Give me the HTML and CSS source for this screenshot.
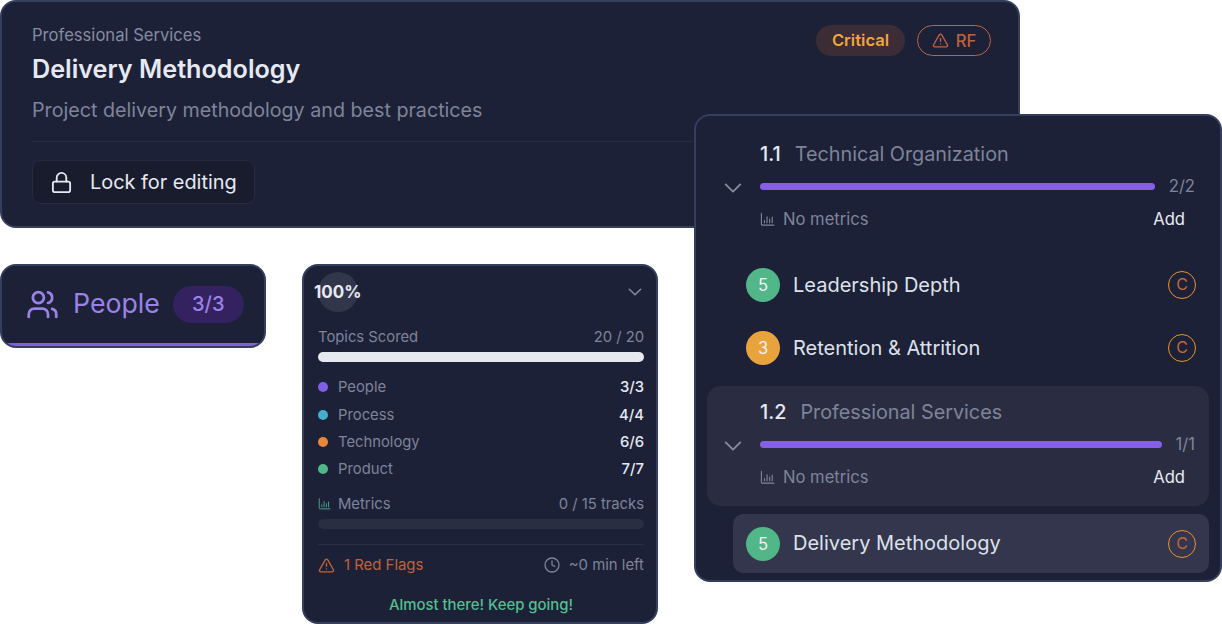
FILE: index.html
```html
<!DOCTYPE html>
<html lang="en">
<head>
    <meta charset="UTF-8">
    <meta name="viewport" content="width=device-width, initial-scale=1.0">
    <title>Delivery Methodology</title>
    <link rel="stylesheet" href="styles.css">
</head>
<body>
    <svg class="icon-defs" width="0" height="0">
        <symbol id="bars" viewBox="0 0 16 16">
            <path d="M1.500 1.500v11.500a1 1 0 0 0 1 1h12.300M4.800 11.500V9M7.500 11.500V5M10.300 11.500V7.500M13 11.500V5.500" fill="none" stroke="currentColor" stroke-width="1.200" stroke-linecap="round" stroke-linejoin="round"/>
        </symbol>
        <symbol id="chevron" viewBox="0 0 16 16">
            <path d="M1.500 4.800 8 11.200l6.500-6.400" fill="none" stroke="currentColor" stroke-width="1.700" stroke-linecap="round" stroke-linejoin="round"/>
        </symbol>
        <symbol id="warn" viewBox="0 0 24 24">
            <path d="m21.730 18-8-14a2 2 0 0 0-3.480 0l-8 14A2 2 0 0 0 4 21h16a2 2 0 0 0 1.730-3ZM12 9v4M12 17h.01" fill="none" stroke="currentColor" stroke-width="1.900" stroke-linecap="round" stroke-linejoin="round"/>
        </symbol>
    </svg>

    <section class="card method-card">
        <div class="method-top">
            <div>
                <div class="method-group">Professional Services</div>
                <h1 class="method-title">Delivery Methodology</h1>
            </div>
            <div class="method-badges">
                <span class="badge-critical">Critical</span>
                <span class="badge-rf"><svg class="rf-icon"><use href="#warn"/></svg>RF</span>
            </div>
        </div>
        <p class="method-desc">Project delivery methodology and best practices</p>
        <div class="method-rule"></div>
        <button class="lock-btn">
            <svg class="lock-icon" viewBox="0 0 24 24"><rect x="3" y="11" width="18" height="11" rx="2" fill="none" stroke="currentColor" stroke-width="1.900"/><path d="M7 11V7a5 5 0 0 1 10 0v4" fill="none" stroke="currentColor" stroke-width="1.900" stroke-linecap="round"/></svg>
            Lock for editing
        </button>
    </section>

    <section class="card people-card">
        <svg class="people-icon" viewBox="0 0 24 24"><g fill="none" stroke="currentColor" stroke-width="2" stroke-linecap="round" stroke-linejoin="round"><path d="M16 21v-2a4 4 0 0 0-4-4H6a4 4 0 0 0-4 4v2"/><circle cx="9" cy="7" r="4"/><path d="M22 21v-2a4 4 0 0 0-3-3.870"/><path d="M16 3.130a4 4 0 0 1 0 7.750"/></g></svg>
        <span class="people-label">People</span>
        <span class="people-count">3/3</span>
    </section>

    <section class="card progress-card">
        <div class="progress-head">
            <div class="pct-wrap"><span class="pct-ring"></span><span class="pct-text">100%</span></div>
            <svg class="progress-chevron"><use href="#chevron"/></svg>
        </div>
        <div class="stat-row topics-row"><span>Topics Scored</span><span>20 / 20</span></div>
        <div class="topics-track"></div>
        <ul class="pillar-list">
            <li class="pillar"><span class="dot dot-people"></span><span class="pillar-name">People</span><b class="pillar-num">3/3</b></li>
            <li class="pillar"><span class="dot dot-process"></span><span class="pillar-name">Process</span><b class="pillar-num">4/4</b></li>
            <li class="pillar"><span class="dot dot-tech"></span><span class="pillar-name">Technology</span><b class="pillar-num">6/6</b></li>
            <li class="pillar"><span class="dot dot-product"></span><span class="pillar-name">Product</span><b class="pillar-num">7/7</b></li>
        </ul>
        <div class="stat-row metrics-row"><span class="metrics-label"><svg class="metrics-icon"><use href="#bars"/></svg>Metrics</span><span>0 / 15 tracks</span></div>
        <div class="metrics-track"></div>
        <div class="progress-foot">
            <span class="flags"><svg class="flags-icon"><use href="#warn"/></svg>1 Red Flags</span>
            <span class="time-left">
                <svg class="clock-icon" viewBox="0 0 24 24"><circle cx="12" cy="12" r="10.500" fill="none" stroke="currentColor" stroke-width="1.900"/><path d="M12 6v6l4 2" fill="none" stroke="currentColor" stroke-width="1.900" stroke-linecap="round" stroke-linejoin="round"/></svg>
                ~0 min left
            </span>
        </div>
        <div class="keep-going">Almost there! Keep going!</div>
    </section>

    <section class="card tree-card">
        <div class="section-row section-first">
            <svg class="section-chevron"><use href="#chevron"/></svg>
            <div class="section-body">
                <div class="section-title"><b>1.1</b><span>Technical Organization</span></div>
                <div class="section-bar"><div class="bar-fill"></div><span class="bar-count">2/2</span></div>
                <div class="section-meta"><span class="no-metrics"><svg class="meta-icon"><use href="#bars"/></svg>No metrics</span><span class="add-link">Add</span></div>
            </div>
        </div>
        <div class="topic">
            <span class="score score-green">5</span><span class="topic-name">Leadership Depth</span><span class="c-mark">C</span>
        </div>
        <div class="topic">
            <span class="score score-amber">3</span><span class="topic-name">Retention &amp; Attrition</span><span class="c-mark">C</span>
        </div>
        <div class="section-row section-active">
            <svg class="section-chevron"><use href="#chevron"/></svg>
            <div class="section-body">
                <div class="section-title"><b>1.2</b><span>Professional Services</span></div>
                <div class="section-bar"><div class="bar-fill"></div><span class="bar-count">1/1</span></div>
                <div class="section-meta"><span class="no-metrics"><svg class="meta-icon"><use href="#bars"/></svg>No metrics</span><span class="add-link">Add</span></div>
            </div>
        </div>
        <div class="topic topic-active">
            <span class="score score-green">5</span><span class="topic-name">Delivery Methodology</span><span class="c-mark">C</span>
        </div>
    </section>
</body>
</html>
```

FILE: styles.css
```css
* {
    box-sizing: border-box;
}
html, body {
    margin: 0;
    padding: 0;
}
body {
    position: relative;
    width: 1222px;
    height: 624px;
    overflow: hidden;
    background-color: #fff;
    font-family: Inter, "Liberation Sans", sans-serif;
    color: #e7e9f1;
}
.icon-defs {
    position: absolute;
}
.card {
    position: absolute;
    background-color: #1c2138;
    border: 2px solid #333f5c;
}

/* top card */
.method-card {
    left: 0;
    top: 0;
    width: 1020px;
    height: 228px;
    border-radius: 16px;
    padding: 23px 27px 0 30px;
}
.method-top {
    display: flex;
    justify-content: space-between;
}
.method-group {
    font-size: 16.6px;
    line-height: 20px;
    color: #868b9f;
}
.method-title {
    margin: 8px 0 0;
    font-size: 25.2px;
    line-height: 32px;
    font-weight: 600;
    color: #e7e9f1;
}
.method-badges {
    display: flex;
    gap: 12px;
    align-items: flex-start;
}
.badge-critical {
    width: 89px;
    height: 31px;
    border-radius: 16px;
    background-color: #3b2c35;
    color: #f0a63c;
    font-size: 16.6px;
    font-weight: 600;
    line-height: 31px;
    text-align: center;
}
.badge-rf {
    display: flex;
    align-items: center;
    justify-content: center;
    gap: 7px;
    width: 74px;
    height: 31px;
    border: 1px solid #c0623c;
    border-radius: 16px;
    color: #c0623c;
    font-size: 16.6px;
    font-weight: 500;
}
.rf-icon {
    width: 17px;
    height: 17px;
}
.method-desc {
    margin: 13px 0 0;
    font-size: 19.7px;
    line-height: 24px;
    color: #7f8498;
}
.method-rule {
    height: 1px;
    margin-top: 19px;
    background-color: #272c44;
}
.lock-btn {
    display: flex;
    align-items: center;
    gap: 17px;
    width: 223px;
    height: 44px;
    margin-top: 18px;
    padding: 0 0 0 17px;
    background-color: #191c2d;
    border: 1px solid #262b42;
    border-radius: 8px;
    color: #e7e9f1;
    font-family: inherit;
    font-size: 19.9px;
    font-weight: 400;
}
.lock-icon {
    width: 23px;
    height: 23px;
}

/* people tab */
.people-card {
    left: 0;
    top: 264px;
    width: 266px;
    height: 84px;
    border-radius: 16px;
    display: flex;
    align-items: center;
    padding: 0 0 4px 24px;
    color: #9b82e6;
    overflow: hidden;
}
.people-card::after {
    content: "";
    position: absolute;
    left: 0;
    right: 0;
    bottom: 0;
    height: 3px;
    background-color: #7f5fe0;
}
.people-icon {
    width: 33px;
    height: 33px;
    flex: none;
}
.people-label {
    margin: 0 0 2px 14px;
    font-size: 26.7px;
    line-height: 32px;
}
.people-count {
    width: 71px;
    height: 37px;
    margin-left: 13px;
    border-radius: 19px;
    background-color: #33225f;
    font-size: 20px;
    font-weight: 500;
    line-height: 37px;
    text-align: center;
}

/* progress summary */
.progress-card {
    left: 302px;
    top: 264px;
    width: 356px;
    height: 360px;
    border-radius: 16px;
    padding: 6px 12px 0 14px;
}
.progress-head {
    display: flex;
    justify-content: space-between;
    align-items: center;
    height: 40px;
}
.pct-wrap {
    position: relative;
    width: 40px;
    height: 40px;
}
.pct-ring {
    position: absolute;
    left: 0;
    top: 0;
    width: 40px;
    height: 40px;
    border-radius: 50%;
    background-color: #32364b;
}
.pct-text {
    position: absolute;
    left: -4px;
    top: 10px;
    font-size: 17px;
    line-height: 20px;
    font-weight: 700;
    color: #e7e9f1;
    white-space: nowrap;
}
.progress-chevron {
    width: 14px;
    height: 14px;
    color: #868b9f;
    margin-right: 2px;
}
.stat-row {
    display: flex;
    justify-content: space-between;
    font-size: 14.8px;
    line-height: 18px;
    color: #7f8498;
}
.topics-row {
    margin-top: 16px;
}
.topics-track {
    height: 10px;
    margin-top: 6px;
    border-radius: 5px;
    background-color: #e7e9f1;
}
.pillar-list {
    list-style: none;
    margin: 11.5px 0 0;
    padding: 0;
}
.pillar {
    display: flex;
    align-items: center;
    height: 27.4px;
    font-size: 14.8px;
    color: #7f8498;
}
.dot {
    width: 10px;
    height: 10px;
    border-radius: 50%;
    margin-right: 10px;
}
.dot-people { background-color: #7f5fe8; }
.dot-process { background-color: #46aec8; }
.dot-tech { background-color: #e8873c; }
.dot-product { background-color: #52b788; }
.pillar-name {
    flex: 1;
}
.pillar-num {
    font-weight: 500;
    color: #e7e9f1;
}
.metrics-row {
    margin-top: 12px;
}
.metrics-label {
    display: flex;
    align-items: center;
    gap: 7px;
}
.metrics-icon {
    width: 13px;
    height: 14px;
    color: #4f9f8a;
}
.metrics-track {
    height: 10px;
    margin-top: 6px;
    border-radius: 5px;
    background-color: #2a2e43;
}
.progress-foot {
    display: flex;
    justify-content: space-between;
    align-items: center;
    margin-top: 15px;
    padding-top: 10px;
    border-top: 1px solid #2a2e43;
    font-size: 14.9px;
    line-height: 20px;
}
.flags {
    display: flex;
    align-items: center;
    gap: 9px;
    color: #c0623c;
}
.flags-icon {
    width: 17px;
    height: 17px;
}
.time-left {
    display: flex;
    align-items: center;
    gap: 9px;
    color: #7f8498;
}
.clock-icon {
    width: 16px;
    height: 16px;
}
.keep-going {
    margin-top: 21px;
    font-size: 14.9px;
    line-height: 18px;
    font-weight: 500;
    text-align: center;
    color: #57bd8e;
}

/* section tree */
.tree-card {
    left: 694px;
    top: 114px;
    width: 528px;
    height: 468px;
    border-radius: 16px;
    padding: 0 11px;
}
.section-row {
    display: flex;
    align-items: center;
    padding-right: 14px;
}
.section-first {
    height: 139px;
}
.section-chevron {
    flex: none;
    width: 18px;
    height: 18px;
    margin: 4px 0 0 17px;
    color: #868b9f;
}
.section-body {
    flex: 1;
    margin-left: 18px;
}
.section-title {
    display: flex;
    gap: 14px;
    font-size: 19.8px;
    line-height: 24px;
    color: #7f8498;
}
.section-title b {
    font-weight: 500;
    color: #e7e9f1;
}
.section-bar {
    display: flex;
    align-items: center;
    gap: 14px;
    margin-top: 10px;
}
.bar-fill {
    flex: 1;
    height: 7px;
    border-radius: 4px;
    background-color: #8560e6;
}
.bar-count {
    font-size: 16.6px;
    line-height: 20px;
    color: #7f8498;
}
.section-meta {
    display: flex;
    justify-content: space-between;
    align-items: center;
    margin-top: 13px;
    font-size: 16.6px;
    line-height: 20px;
    padding-right: 10px;
}
.no-metrics {
    display: flex;
    align-items: center;
    gap: 8px;
    color: #7f8498;
}
.meta-icon {
    width: 15px;
    height: 15px;
}
.add-link {
    color: #e7e9f1;
}
.section-active {
    height: 120px;
    padding-bottom: 5px;
    background-color: #2a2d42;
    border-radius: 14px;
    margin-top: 8px;
}
.topic {
    display: flex;
    align-items: center;
    height: 60px;
    margin-left: 26px;
    padding: 0 13px;
}
.topic + .topic {
    margin-top: 3px;
}
.topic-active {
    height: 59px;
    margin-top: 8px;
    background-color: #33364d;
    border-radius: 10px;
}
.topic-active .topic-name {
    margin-bottom: 2px;
}
.score {
    width: 34px;
    height: 34px;
    border-radius: 50%;
    font-size: 16.6px;
    line-height: 34px;
    text-align: center;
    color: #f1f2f6;
}
.score-green { background-color: #52b788; }
.score-amber { background-color: #e8a33c; }
.topic-name {
    flex: 1;
    margin-left: 13px;
    font-size: 20px;
    line-height: 24px;
    color: #dfe1ea;
}
.c-mark {
    width: 28px;
    height: 28px;
    border: 1.5px solid #e8942e;
    border-radius: 50%;
    font-size: 16px;
    line-height: 25px;
    text-align: center;
    color: #c2673a;
}
```
